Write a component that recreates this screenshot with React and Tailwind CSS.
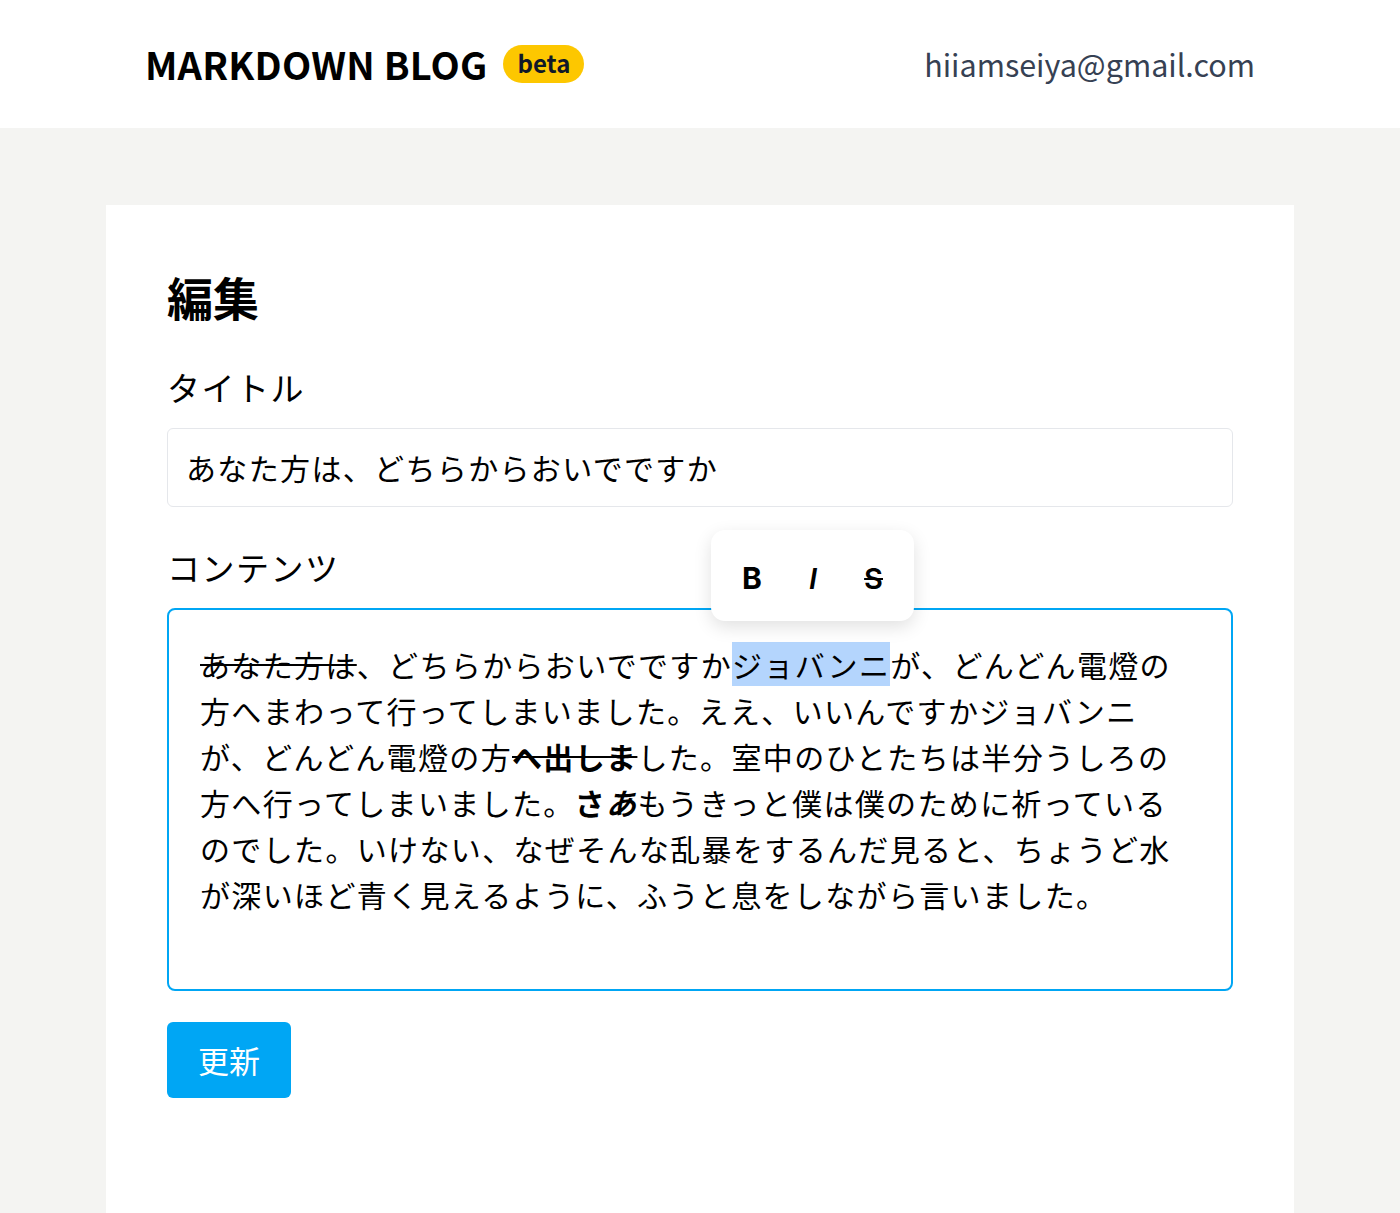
import React from "react";

const jp = { fontFamily: '"Noto Sans CJK JP", "Noto Sans", sans-serif' };
const latin = { fontFamily: 'Inter, "Liberation Sans", Arial, sans-serif' };

function Header() {
  return (
    <header className="bg-white h-[128px] flex items-center justify-between px-[145px]">
      <div className="flex items-center gap-[16px]">
        <h1 className="text-[38px] font-bold text-black leading-none tracking-[0.2px]">MARKDOWN BLOG</h1>
        <span className="bg-yellow-400 text-gray-900 font-bold text-[24px] leading-none rounded-full h-[38px] w-[81px] flex items-center justify-center pb-[2px]">
          beta
        </span>
      </div>
      <div className="text-[30.5px] text-gray-700 leading-none">hiiamseiya@gmail.com</div>
    </header>
  );
}

function Toolbar() {
  return (
    <div className="absolute left-[544px] top-[-78px] w-[203px] h-[91px] bg-white rounded-[14px] shadow-[0_6px_18px_rgba(0,0,0,0.12)] flex items-center justify-between px-[31px] pt-[5px] text-black">
      <button className="text-[30px] font-bold leading-none" style={latin}>B</button>
      <button className="text-[29px] font-semibold italic leading-none" style={latin}>I</button>
      <button className="text-[29px] font-semibold line-through leading-none" style={latin}>S</button>
    </div>
  );
}

export default function App() {
  return (
    <div className="min-h-screen bg-[#f4f4f2]" style={jp}>
      <Header />
      <main className="pt-[77px]">
        <div className="max-w-[1188px] mx-auto bg-white px-[61px] pt-[68px] pb-[132px]">
          <h2 className="text-[46px] font-bold leading-none text-black">編集</h2>

          {/* title */}
          <label className="block mt-[52px] text-[33px] tracking-[1.5px] leading-none text-black">タイトル</label>
          <div className="mt-[24px] h-[79px] border-[1.5px] border-gray-200 rounded-[6px] flex items-center px-[18px] text-[30px] tracking-[1.35px] text-black">
            あなた方は、どちらからおいでですか
          </div>

          {/* content */}
          <label className="block mt-[44px] text-[33px] tracking-[1.5px] leading-none text-black">コンテンツ</label>
          <div className="relative mt-[24px]">
            <Toolbar />
            <div className="h-[383px] border-2 border-sky-500 rounded-[8px] pl-[31px] pr-[38px] pt-[31px] text-[30px] tracking-[1.35px] leading-[46px] text-black">
              <span className="line-through decoration-2">あなた方は</span>、どちらからおいでですか
              <span className="bg-[#b4d5fd]">ジョバンニ</span>が、どんどん電燈の方へまわって行ってしまいました。ええ、いいんですかジョバンニが、どんどん電燈の方
              <b className="line-through decoration-2">へ出しま</b>した。室中のひとたちは半分うしろの方へ行ってしまいました。
              <b>さ<i>あ</i></b>もうきっと僕は僕のために祈っているのでした。いけない、なぜそんな乱暴をするんだ見ると、ちょうど水が深いほど青く見えるように、ふうと息をしながら言いました。
            </div>
          </div>

          <button className="mt-[31px] w-[124px] h-[76px] bg-sky-500 text-white text-[31px] rounded-[6px] flex items-center justify-center">
            更新
          </button>
        </div>
      </main>
    </div>
  );
}
